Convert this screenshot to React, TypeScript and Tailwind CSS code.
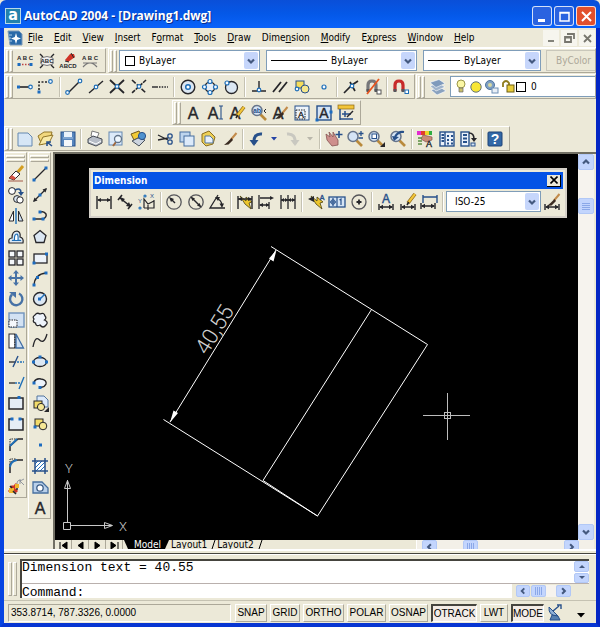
import type { ReactNode } from "react";

const INK = "#26262a";
const BLUE = "#1f6fb8";
const NAVY = "#27508a";
const PALE = "#d5e4f5";

interface LineProps {
  d: string;
  c?: string;
  w?: number;
  f?: string;
  dash?: string;
}

function L({ d, c = INK, w = 1.4, f = "none", dash }: LineProps) {
  return <path d={d} stroke={c} strokeWidth={w} fill={f} strokeDasharray={dash} />;
}

// small ring and square used as snap points
function Ring({ x, y, r = 1.8 }: { x: number; y: number; r?: number }) {
  return <circle cx={x} cy={y} r={r} fill="#f4faff" stroke={BLUE} strokeWidth={1.2} />;
}

function Dot({ x, y }: { x: number; y: number }) {
  return <rect x={x - 1.5} y={y - 1.5} width={3} height={3} fill="#1c6cc0" />;
}

function Abc({ y, t = "ABC", size = 6 }: { y: number; t?: string; size?: number }) {
  return (
    <text x={11} y={y} textAnchor="middle" fontSize={size} fontWeight={700} fontFamily="Liberation Sans, sans-serif" fill={INK}>
      {t}
    </text>
  );
}

function BigA({ x = 11, size = 16, c = INK, y = 16.5 }: { x?: number; size?: number; c?: string; y?: number }) {
  return (
    <text x={x} y={y} textAnchor="middle" fontSize={size} fontFamily="Liberation Sans, sans-serif" fill={c} stroke={c} strokeWidth={0.4}>
      A
    </text>
  );
}

const pencil = (
  <>
    <L d="M18 5 L11 14" c="#8a6512" w={3.6} />
    <L d="M18 5 L11.5 13.4" c="#f2c53a" w={2.2} />
    <L d="M11.8 13 L10 16" w={1.6} />
  </>
);

const brush = (
  <>
    <L d="M18.5 5 L13 11.5" c="#c28a4a" w={2} />
    <path d="M13.5 10 L15 12 L10.5 16.5 L6 17 L9.5 14 Z" fill="#3a2b22" />
  </>
);

const lens = (
  <>
    <L d="M12.5 12.5 L18 18" c="#b98a3c" w={2.6} />
    <circle cx={9} cy={8.5} r={5} fill={PALE} stroke="#66748a" strokeWidth={1.5} />
  </>
);

const bolt = <path d="M6 5 L12 10 L12 6 L18 11 L15 12 L17 18 L11 13 Z" fill="#eec62c" stroke="#4a410f" strokeWidth={0.8} />;

const dimBase = (
  <>
    <L d="M4 13 V19 M18 13 V19 M5 16 H17" />
    <path d="M4 16 L8 13.8 V18.2 Z M18 16 L14 13.8 V18.2 Z" fill={INK} />
  </>
);

function Magnet({ c }: { c: string }) {
  return (
    <>
      <L d="M6 15 V9 Q6 5 10 5 Q14 5 14 9 V15" c={c} w={3.2} />
      <L d="M6 13 V16 M14 13 V16" c="#55565c" w={3} />
    </>
  );
}

const icons: Record<string, ReactNode> = {
  spell1: <><Abc y={10} t="A B C" /><L d="M5 14.5 H17" c="#b44" dash="1.5 1.5" /><Dot x={5} y={14.5} /><Dot x={17} y={14.5} /></>,
  spell2: <><L d="M4 4 L7 7 M18 4 L15 7 M4 18 L7 15 M18 18 L15 15" /><L d="M5 8 Q11 5 17 8 V14 Q11 17 5 14 Z" c="#777" f="#efefef" w={1} /><Abc y={13} /></>,
  spell3: <><path d="M8 10 L13 4 L17 4 L18 7 L11 12 Z" fill="#cf3326" /><L d="M14 3 L17 8 M8 11 L12 12" w={1} /><Abc y={18} t="ABCD" /></>,
  spell4: <><Abc y={10} t="A B C" /><L d="M4 17 Q11 9 18 17 M4 13 H18" c="#777" w={1.2} /></>,
  track: <><L d="M4 11 H16" w={1.6} /><Dot x={4.5} y={11} /><Ring x={16.5} y={11} /></>,
  snapFrom: <><L d="M4 14 V6 H14" dash="2 1.5" w={1.6} /><Dot x={4} y={16} /><Ring x={15.5} y={5.5} /></>,
  endpoint: <><L d="M5 17 L17 5" /><Ring x={4.5} y={16.5} /><Ring x={17} y={5} /></>,
  midpoint: <><L d="M4 17 L18 5" /><Ring x={11} y={11} /></>,
  intersect: <><L d="M4 4 L18 17 M18 4 L4 17" w={1.8} /><Ring x={11} y={10.5} /></>,
  apparent: <><L d="M4 4 L18 17" dash="5 1.5" w={1.6} /><L d="M18 4 L4 17" dash="4 1" w={1.6} /><Ring x={11} y={10.5} /></>,
  extension: <><L d="M3 11 H9" /><L d="M10 11 H19" dash="1.5 1.2" /></>,
  center: <><circle cx={11} cy={11} r={6.8} fill="#dbe7f3" stroke={INK} strokeWidth={1.4} /><circle cx={11} cy={11} r={2.3} fill="#fff" stroke={BLUE} strokeWidth={1.5} /></>,
  quadrant: <><circle cx={11} cy={11} r={5} fill="#e7eef6" stroke={INK} strokeWidth={1.2} /><Ring x={11} y={5.5} r={2} /><Ring x={11} y={16.5} r={2} /><Ring x={5.5} y={11} r={2} /><Ring x={16.5} y={11} r={2} /></>,
  tangent: <><circle cx={11.5} cy={11.5} r={6} fill="#dbe7f3" stroke={INK} strokeWidth={1.3} /><Ring x={7} y={7} r={2} /></>,
  perpend: <><L d="M11 5 V14 M4 15 H18" /><Ring x={11} y={14} /></>,
  parallel: <L d="M4 16 L12 6 M10 16 L18 6" w={1.8} />,
  insertSnap: <><rect x={5} y={5} width={8} height={7} fill="#f5dc5a" stroke={NAVY} /><circle cx={14} cy={13} r={4} fill="#f5e68b" stroke={NAVY} /><Ring x={6} y={13} /></>,
  nodeSnap: <Ring x={11} y={11} r={2} />,
  nearest: <><L d="M4 17 L12 9 L18 5 M10 6 L15 15" w={1.7} /><Ring x={12} y={10} /></>,
  noSnap: <><Magnet c="#77777a" /><L d="M17 3 L5 18" c="#e8541e" w={1.8} /><rect x={15} y={14} width={4} height={4} fill="#fff" stroke="#555" /></>,
  magnet: <><Magnet c="#c72a2a" /><rect x={16} y={14} width={3.5} height={3.5} fill="#fff" stroke={BLUE} /></>,
  layers: <><path d="M4 14 L13 11 L19 15 L10 19 Z" fill="#8aa2bf" stroke="#fff" strokeWidth={0.6} /><path d="M3 10 L12 7 L18 11 L9 15 Z" fill="#9fb3cb" stroke="#fff" strokeWidth={0.6} /><path d="M3 6.5 L12 3.5 L18 7.5 L9 11.5 Z" fill="#7f9abc" stroke="#fff" strokeWidth={0.6} /></>,
  textA: <BigA />,
  textLine: <><BigA x={9} /><L d="M17 4 V17 M15 4 H19 M15 17 H19" c={NAVY} w={1.1} /></>,
  textEdit: <><BigA x={9} /><g>{pencil}</g></>,
  findText: <>{lens}<text x={9} y={11} fontSize={7} textAnchor="middle" fontWeight={700} fontFamily="Liberation Sans, sans-serif" fill={NAVY}>ab</text><L d="M18 7 L16 9 L18 11" w={1} /></>,
  textStyle: <><BigA x={9} />{brush}</>,
  textScale: <><rect x={4} y={4} width={14} height={14} fill="#edf3fa" stroke={NAVY} /><rect x={5} y={8} width={9} height={9} fill="none" stroke={INK} strokeDasharray="1.5 1" /><BigA x={10} size={9} y={16} /></>,
  textJustify: <><rect x={4} y={4} width={14} height={14} fill={PALE} stroke={NAVY} strokeWidth={1.4} /><BigA size={14} y={16} /><Dot x={4} y={18} /><Dot x={18} y={10} /></>,
  textSpace: <><rect x={3} y={3} width={16} height={4} fill="#f2c53a" stroke="#8a6512" strokeWidth={0.7} /><L d="M5 7 V18 M5 17 H18 M7 12 H16 M10 9 V15" w={1.5} c={NAVY} /><L d="M12 15 L18 9" w={1.4} /></>,
  newFile: <path d="M4 5 H14 L18 9 V18 H4 Z" fill="#d6e6f6" stroke="#6488b0" />,
  openFile: <><path d="M3 8 L9 4 L17 4 L16 8 L7 17 Z" fill="#f1d77d" stroke="#927628" /><path d="M4 17 L8 9 L18 7 L14 15 Z" fill="#f8e9a6" stroke="#927628" /><L d="M17 18 L12 14 M12 18 V14 H16" c={NAVY} w={1.6} /></>,
  save: <><rect x={4} y={4} width={14} height={14} fill="#5685bd" stroke={NAVY} /><rect x={7} y={4} width={8} height={5} fill="#eaf2fb" /><rect x={7} y={12} width={8} height={6} fill="#f4f7fa" /><L d="M6 10 H16" c="#a8c4e3" w={1} /></>,
  print: <><path d="M8 3 L15 5 L13 10 L7 8 Z" fill="#fff" stroke="#777" /><path d="M4 11 L9 8 L18 11 V15 L12 18 L4 15 Z" fill="#b6bcc6" stroke="#474c55" /><L d="M5 13 L12 16 L17 13" c="#fff" w={1} /></>,
  preview: <><rect x={4} y={4} width={13} height={13} fill="#dceafa" stroke="#6488b0" /><L d="M11 14 L8 18" c="#a0673c" w={2} /><circle cx={13} cy={11} r={3.5} fill="#eff7ff" stroke="#62748a" strokeWidth={1.3} /></>,
  publish: <><path d="M4 6 L12 3 L15 8 L7 12 Z" fill="#f2cb36" stroke="#73591a" /><path d="M5 13 L11 10 L18 12 L12 18 Z" fill="#ccd4df" stroke="#47505c" /><circle cx={15} cy={8} r={3.6} fill="#4f92cf" stroke={NAVY} /></>,
  cut: <><L d="M4 7 L14 12 M4 12 L14 10" w={1.3} /><circle cx={16} cy={8} r={2.2} fill="none" stroke={NAVY} strokeWidth={1.3} /><circle cx={16} cy={14} r={2.2} fill="none" stroke={NAVY} strokeWidth={1.3} /></>,
  copyClip: <><rect x={4} y={4} width={10} height={10} fill="#bed5ee" stroke="#466f9f" /><rect x={8} y={8} width={10} height={10} fill="#dceafa" stroke="#466f9f" /></>,
  paste: <><path d="M5 6 L12 3 L18 9 L16 16 L9 18 L5 14 Z" fill="#edcf55" stroke="#8b6d1c" /><path d="M8 8 H13 L16 11 V15 H8 Z" fill="#e8f0fa" stroke="#52759d" /></>,
  match: brush,
  undo: <><L d="M16 6 Q7 5 8 16" c={NAVY} w={3} /><path d="M3.5 12 H12.5 L8 18 Z" fill={NAVY} /></>,
  redo: <><L d="M6 6 Q15 5 14 16" c="#c9c8c0" w={3} /><path d="M9.5 12 H18.5 L14 18 Z" fill="#c9c8c0" /></>,
  pan: <><path d="M3 6 L7 9 L6 4 L10 9 L10 4 L13 9 L15 12 L15 17 L9 18 L4 12 Z" fill="#ce8f8c" stroke="#855352" strokeWidth={0.8} /><L d="M16 3 V10 M12.5 6.5 H19.5" c={NAVY} w={1.6} /></>,
  zoomRt: <>{lens}<L d="M17 3 V8 M14.5 5.5 H19.5 M14.5 10 H19" c={NAVY} w={1.3} /></>,
  zoomWin: <>{lens}<rect x={7} y={6} width={4.5} height={4.5} fill="#fff" stroke={NAVY} /><path d="M15 19 H20 V14 Z" fill={INK} /></>,
  zoomPrev: <>{lens}<L d="M17 4 Q11 3 8 9" c={NAVY} w={2.2} /><path d="M5 8 L12 9 L7 13 Z" fill={NAVY} /></>,
  props: <><rect x={3} y={3} width={4} height={4} fill="#e32bd0" /><rect x={7} y={3} width={4} height={4} fill="#e23c2a" /><rect x={11} y={3} width={4} height={4} fill="#ecd52a" /><rect x={15} y={3} width={3} height={4} fill="#30ad41" /><path d="M9 7 L18 9 L18 12 L12 14 L7 11 Z" fill="#c98a76" stroke="#855352" strokeWidth={0.7} /><L d="M4 10 H8 M4 13 H8 M4 16 H8" c="#5a8e41" w={1.5} /><BigA x={15} size={9} y={19} /></>,
  designCtr: <><rect x={4} y={4} width={14} height={14} fill="#eaf1fa" stroke={NAVY} strokeWidth={1.4} /><L d="M9 4 V18" c={NAVY} /><L d="M5.5 7 H8 M5.5 10 H8 M5.5 13 H8 M11 8 H13 M15 8 H17 M11 12 H13 M15 12 H17 M11 15.5 H13 M15 15.5 H17" c={NAVY} w={1.8} /></>,
  palettes: <><rect x={4} y={4} width={8} height={14} fill="#eaf1fa" stroke={NAVY} strokeWidth={1.4} /><L d="M6 7 H10 M6 10.5 H10 M6 14 H10" c={NAVY} w={1.8} /><L d="M12 5 Q17 5 17 11" w={1.6} /><path d="M14 10 H20 L17 14 Z" fill={INK} /><rect x={14} y={15} width={4} height={3} fill={PALE} stroke={NAVY} /></>,
  help: <><rect x={4} y={4} width={14} height={14} rx={1} fill="#3368a6" stroke="#1e4276" /><text x={11} y={16} fontSize={14} textAnchor="middle" fontWeight={700} fontFamily="Liberation Sans, sans-serif" fill="#fff">?</text></>,
  erase: <><L d="M18 3 L12 10" c="#d49e20" w={3} /><path d="M11 8 L15 11 L9 17 L4 15 Z" fill="#fff" stroke={INK} /><path d="M7 12 L11 15 L9 17 L4 15 Z" fill="#d65444" /><L d="M3 18 H18" c="#a45a48" w={1} /></>,
  copy: <><circle cx={7} cy={7} r={3.4} fill="#fff" stroke={INK} /><circle cx={12} cy={15} r={3.4} fill="#dbe7f3" stroke={INK} /><circle cx={15} cy={16} r={3.2} fill="#fff" stroke={INK} /><L d="M10 6 Q16 3 16 9" c={NAVY} w={1.6} /><path d="M13 8 H19 L16 12 Z" fill={NAVY} /></>,
  mirror: <><path d="M8.5 6 V16 H4 Z" fill="#fff" stroke={INK} /><path d="M13.5 6 V16 H18 Z" fill="#cfe0f2" stroke={INK} /><L d="M11 3 V19" c={BLUE} w={1.4} /></>,
  offset: <><L d="M4 17 Q3 12 7 12 Q7 5 12 5 Q16 6 15 11 Q19 12 18 17 Z" c={INK} w={1.2} f="#dbe7f3" /><L d="M7 14.5 Q8 14 9.5 14 Q9 8 12 8 Q13.5 9 13 14 Q15 14 16 14.5 Z" c={BLUE} w={1.2} f="#fff" /></>,
  array: <>{[4, 12].map((x) => [4, 12].map((y) => <rect key={`${x}-${y}`} x={x} y={y} width={6} height={6} fill="#f4f7fa" stroke={INK} strokeWidth={1.3} />))}</>,
  move: <><L d="M11 5 V17 M5 11 H17" c="#4772a6" w={2} /><path d="M11 3 L14 6.5 H8 Z M11 19 L14 15.5 H8 Z M3 11 L6.5 8 V14 Z M19 11 L15.5 8 V14 Z" fill="#4772a6" /></>,
  rotate: <><L d="M14 5.5 A6.2 6.2 0 1 1 7 6.5" c="#4772a6" w={2.4} /><path d="M4 4 H11 V10 Z" fill="#4772a6" /></>,
  scale: <><rect x={4} y={4} width={15} height={14} fill="#d3e2f3" stroke="#6f93bd" strokeWidth={1.4} /><rect x={4} y={11} width={8} height={7} fill="#f5f8fc" stroke={INK} strokeDasharray="1.5 1" /></>,
  stretch: <><rect x={4} y={4} width={6} height={14} fill="#fff" stroke={INK} /><L d="M10 4 V18" dash="1.5 1" w={1.4} /><path d="M11 4 L18.5 18 H11 Z" fill="#cfe0f2" stroke="#3f6da6" strokeWidth={1.3} /></>,
  trim: <><L d="M4 11 H11" w={1.3} /><L d="M12 11 H19" dash="2 1" c={BLUE} w={1.3} /><L d="M13 5 L8 16" c={NAVY} w={1.4} /></>,
  extend: <><L d="M4 11 H10" w={1.3} /><L d="M10 11 H16" dash="2 1" c={BLUE} w={1.3} /><L d="M19 5 L14 17" c={BLUE} w={1.4} /></>,
  breakPt: <><rect x={4} y={6} width={14} height={11} fill="#e5edf6" stroke={INK} strokeWidth={1.5} /><Dot x={14} y={5.5} /></>,
  breakAt: <><L d="M7 6 H4 V17 H18 V6 H15" f="#e5edf6" w={1.5} /><Dot x={7} y={6} /><Dot x={15} y={6} /></>,
  chamfer: <><L d="M5 17 V12 L13 5 H18" w={1.5} /><L d="M5 11 V5 H12" dash="1.5 1" w={1} /><L d="M5 12 L12 5" c={BLUE} w={1.8} /></>,
  fillet: <><L d="M5 18 V12 Q5 5 13 5 H18" w={1.5} /><L d="M5 10 V4 H11" dash="1.5 1" w={1} /><L d="M5 12 Q6 6 12 5" c={BLUE} w={1.8} /></>,
  explode: <><L d="M4 16 L12 8 M6 10 L12 16" c="#cf3326" w={3} /><path d="M4 12 H9 V17 H4 Z M10 8 H14 V12 H10 Z" fill="#efb62c" /><L d="M5 10 L7 12 M8 15 L11 18 M11 13 H13" w={1.6} /><L d="M12 8 Q12 3 16 5 M15 5 L19 3 M15 5 L19 9 M15 3 V8" c="#8a9099" w={0.9} /></>,
  line: <><L d="M5 17 L17 5" w={1.3} /><Dot x={5} y={17} /><Dot x={17} y={5} /></>,
  xline: <><L d="M5 17 L17 5" w={1.3} /><path d="M4 18 L8.5 16.5 L5.5 13.500 Z M18 4 L13.5 5.5 L16.5 8.5 Z" fill={INK} /><Dot x={11} y={11} /></>,
  pline: <><L d="M5 14 H14 Q18 12 17 9 Q15 6 12 7" w={1.4} /><Dot x={5} y={14} /><Dot x={14} y={14} /><Dot x={11} y={7} /></>,
  polygon: <L d="M11 4.5 L17 9.5 L15 16.5 H7 L5 9.5 Z" f="#dbe7f3" w={1.3} />,
  rect: <><rect x={5} y={7} width={13} height={9} fill="#edf3fa" stroke={INK} strokeWidth={1.3} /><Dot x={5} y={16} /><Dot x={17.5} y={7} /></>,
  arc: <><L d="M5 17 Q6 6 17 5" w={1.3} /><Dot x={5} y={17} /><Dot x={8.5} y={9.5} /><Dot x={17} y={5} /></>,
  circle: <><circle cx={11} cy={11} r={6.5} fill="#dbe7f3" stroke={INK} strokeWidth={1.4} /><L d="M11 11 L16 6" c={BLUE} /><Dot x={10.5} y={11} /></>,
  cloud: <L d="M6 6 Q8 3 11 5 Q15 3 16 7 Q18 9 15.5 11 Q20 13 17 16 Q14 20 11 16 Q7 18 6.5 14 Q3 13 5 10 Q3 8 6 6 Z" f="#edf3fa" w={1.3} />,
  spline: <L d="M4 17 Q6 6 10 9.5 Q15 15 18 4" w={1.3} />,
  ellipse: <><ellipse cx={11} cy={11} rx={6.5} ry={4.5} fill="#dbe7f3" stroke={INK} strokeWidth={1.3} /><Dot x={4.5} y={11} /><Dot x={17.5} y={11} /><Dot x={11} y={6} /></>,
  ellipseArc: <><L d="M5 10 Q7 6 12 7 Q18 8 17 12 Q15 16 11 15" w={1.4} f="#edf3fa" /><Dot x={5} y={11} /><Dot x={11} y={15.5} /></>,
  insertBlk: <><path d="M8 3 H15 L19 7 V14 H8 Z" fill="#dceafa" stroke="#52759d" /><rect x={5} y={8} width={8} height={7} fill="#f3dc6a" stroke={INK} /><circle cx={12} cy={14} r={3.6} fill="#f6e896" stroke={INK} /><path d="M15 19 H20 V14 Z" fill={INK} /></>,
  makeBlk: <><rect x={6} y={6} width={8} height={7} fill="#f3dc6a" stroke={INK} /><circle cx={14} cy={13} r={3.8} fill="#f6e896" stroke={INK} /><Dot x={6} y={14} /></>,
  point: <Dot x={11.5} y={11} />,
  hatch: <><rect x={6} y={6} width={10} height={10} fill="#fff" /><L d="M6 9 L9 6 M6 13 L13 6 M7 16 L16 7 M11 16 L16 11" c={BLUE} w={1} /><L d="M6 3 V19 M16 3 V19 M3 6 H19 M3 16 H19" c={NAVY} w={1.5} /></>,
  region: <><path d="M4 6 H13 L19 12 V17 H4 Z" fill="#b9d0ea" stroke="#466f9f" strokeWidth={1.3} /><circle cx={11} cy={12} r={3.2} fill="#fff" stroke="#3b5d87" strokeWidth={1.3} /></>,
  dimLinear: <><L d="M4 5 V18 M18 5 V18 M5 9 H17" /><path d="M4 9 L8 7 V11 Z M18 9 L14 7 V11 Z" fill={INK} /></>,
  dimAligned: <><L d="M4 9 L8 4 M14 18 L18 13 M6 7 L16 15" w={1.6} /><path d="M6 6 L11 8 L8 11 Z M17 16 L12 15 L15 11 Z" fill={INK} /></>,
  dimOrdinate: <><L d="M8 17 V8 L12 13 L18 10 M8 17 H18 V9 M12 14 V19" w={1.2} /><text x={2} y={12} fontSize={6} fill={NAVY} fontFamily="Liberation Sans, sans-serif">Y</text><text x={14} y={7} fontSize={6} fill={NAVY} fontFamily="Liberation Sans, sans-serif">X</text><Ring x={4} y={17} r={1} /><Ring x={9} y={5} r={1} /></>,
  dimRadius: <><circle cx={11} cy={11} r={7.2} fill="none" stroke="#56565a" strokeWidth={1.3} /><L d="M12 12 L8 8" /><path d="M6 6 L11 8 L8 11 Z" fill={INK} /></>,
  dimDiameter: <><circle cx={11} cy={11} r={7.2} fill="none" stroke="#56565a" strokeWidth={1.3} /><L d="M7 7 L15 15" /><path d="M5.5 5.5 L10 7.5 L7.5 10 Z M16.5 16.5 L12 14.5 L14.5 12 Z" fill={INK} /></>,
  dimAngular: <><L d="M12 4 L4 17 H19 M10 7 Q16 9 16 15" w={1.3} /><path d="M16 17 L13.5 12.5 H18 Z M9 6 L14 6 L12 10 Z" fill={INK} /></>,
  dimQuick: <>{bolt}<L d="M4 5 V18 M18 5 V18 M4 8 H18" /><path d="M4 8 L8 6 V10 Z M18 8 L14 6 V10 Z" fill={INK} /></>,
  dimBaseline: <><L d="M4 4 V18 M5 7 H17 M5 14 H14 M14 11 V18" w={1.3} /><path d="M19 7 L15 5 V9 Z M4 14 L8 12 V16 Z M14 14 L11 12 V16 Z" fill={INK} /></>,
  dimContinue: <><L d="M4 4 V18 M11 4 V18 M18 4 V18 M4 9 H18" w={1.3} /><path d="M4 9 L7 7 V11 Z M11 9 L8 7 V11 Z M11 9 L14 7 V11 Z M18 9 L15 7 V11 Z" fill={INK} /></>,
  leader: <>{bolt}<path d="M3 8 L9 5 V11 Z" fill={INK} /><BigA x={17} size={7} y={9} c={NAVY} /></>,
  tolerance: <><rect x={3} y={6} width={16} height={10} fill={PALE} stroke={NAVY} strokeWidth={1.3} /><L d="M11 6 V16 M7 7 V15 M4 11 H10 M13.5 9 L15 8 V14" c={NAVY} w={1.2} /><circle cx={7} cy={11} r={2.2} fill="none" stroke={NAVY} /></>,
  centerMark: <><circle cx={11} cy={11} r={7} fill="none" stroke="#56565a" strokeWidth={1.3} /><L d="M11 8.5 V13.5 M8.5 11 H13.5" w={1.8} /></>,
  dimTextEdit: <><BigA size={12} y={12} c={NAVY} />{dimBase}</>,
  dimEdit: <><g transform="translate(0 -2)">{pencil}</g>{dimBase}</>,
  dimUpdate: <><L d="M5 4 V12 M19 4 V12 M5 6 H19" c={NAVY} /><g transform="translate(-1 -1)">{dimBase}</g></>,
  dimStyle: <><g transform="translate(0 -2)">{brush}</g>{dimBase}</>,
  satellite: <><path d="M5 5 Q4 14 14 14 L10 10 Z" fill="#8fb0d6" stroke={NAVY} /><L d="M9 9 L15 4 M13 3 H17 V7" c={NAVY} /><path d="M8 13 L14 14 L16 18 H6 Z" fill="#5680b0" stroke={NAVY} /></>,
};

function Icon({ name }: { name: string }) {
  return (
    <svg viewBox="0 0 22 22" className="h-[22px] w-[22px] shrink-0" aria-hidden="true">
      {icons[name]}
    </svg>
  );
}

function Tool({ name }: { name: string }) {
  return (
    <button type="button" aria-label={name} className="flex min-h-0 min-w-0 flex-1 items-center justify-center">
      <Icon name={name} />
    </button>
  );
}

function Tools({ names }: { names: string[] }) {
  return (
    <>
      {names.map((name, i) =>
        name === "|" ? <span key={i} className="mx-[2px] h-5 w-[2px] border-l border-r border-l-[#c5c2b2] border-r-white" /> : <Tool key={i} name={name} />
      )}
    </>
  );
}

function Grip({ vertical = false }: { vertical?: boolean }) {
  const edge = "border-t border-l border-b border-r border-t-white border-l-white border-r-[#aca899] border-b-[#aca899]";
  return vertical ? (
    <span className="flex flex-col gap-px px-px py-[2px]">
      <span className={`h-[3px] ${edge}`} />
      <span className={`h-[3px] ${edge}`} />
    </span>
  ) : (
    <span className="mx-px flex h-[22px] shrink-0 gap-px">
      <span className={`w-[3px] ${edge}`} />
      <span className={`w-[3px] ${edge}`} />
    </span>
  );
}

const bar = "flex h-[25px] items-center border-t border-l border-r border-b border-t-white border-l-white border-r-[#aca899] border-b-[#aca899]";

type Dir = "up" | "down" | "left" | "right";
const chevrons: Record<Dir, string> = {
  up: "M4 8.5 L7 5.5 L10 8.5",
  down: "M4 5.5 L7 8.5 L10 5.5",
  left: "M8.5 4 L5.5 7 L8.5 10",
  right: "M5.5 4 L8.5 7 L5.5 10",
};

function Chevron({ dir }: { dir: Dir }) {
  return (
    <svg viewBox="0 0 14 14" className="h-[14px] w-[14px]" aria-hidden="true">
      <path d={chevrons[dir]} fill="none" stroke="#44597f" strokeWidth={2.2} />
    </svg>
  );
}

const scrollFace = "flex shrink-0 items-center justify-center overflow-hidden rounded-xs border border-[#b2c8f6] bg-[#c3d5fd]";

interface ComboProps {
  label: string;
  value: string;
  className: string;
  children?: ReactNode;
}

function Combo({ label, value, className, children }: ComboProps) {
  return (
    <label className={`flex h-[21px] items-center border border-[#7f9db9] bg-white p-px pl-1 ${className}`}>
      {children}
      <select aria-label={label} className="ml-1 h-full min-w-0 flex-1 appearance-none bg-white text-[10px] outline-none">
        <option>{value}</option>
      </select>
      <span className="flex h-full w-[14px] shrink-0 items-center justify-center rounded-xs bg-[#c6d6fb]">
        <Chevron dir="down" />
      </span>
    </label>
  );
}

const menus = [
  ["", "F", "ile"],
  ["", "E", "dit"],
  ["", "V", "iew"],
  ["", "I", "nsert"],
  ["F", "o", "rmat"],
  ["", "T", "ools"],
  ["", "D", "raw"],
  ["Dime", "n", "sion"],
  ["", "M", "odify"],
  ["E", "x", "press"],
  ["", "W", "indow"],
  ["", "H", "elp"],
];

function TitleBar() {
  const button = "flex h-[20px] w-[20px] items-center justify-center rounded-[3px] border border-white/80";
  return (
    <header className="flex h-7 shrink-0 items-center rounded-t-md bg-linear-to-b from-[#0a4fd8] via-[#0458e8] to-[#0a62fa] pt-1 pr-1 pl-[5px]">
      <span className="mr-[3px] flex h-4 w-4 items-center justify-center border border-[#b7d9e8] bg-[#2382ad] text-[16px] leading-none font-bold text-white">
        <span className="pb-[3px]">a</span>
      </span>
      <h1 className="flex-1 font-['Open_Sans',sans-serif] text-[12px] font-bold text-white [text-shadow:1px_1px_0_#0a2c8c]">AutoCAD 2004 - [Drawing1.dwg]</h1>
      <div className="flex gap-[2px]">
        <button type="button" aria-label="Minimize" className={`${button} bg-[#2a63e0]`}>
          <svg viewBox="0 0 17 17" className="h-[17px] w-[17px]"><path d="M4 12.5 H11" stroke="#fff" strokeWidth={3} /></svg>
        </button>
        <button type="button" aria-label="Maximize" className={`${button} bg-[#2a63e0]`}>
          <svg viewBox="0 0 17 17" className="h-[17px] w-[17px]"><path d="M4 4.5 H13 V13 H4 Z M4 5 H13" fill="none" stroke="#fff" strokeWidth={1.5} /></svg>
        </button>
        <button type="button" aria-label="Close" className={`${button} bg-[#e2502c]`}>
          <svg viewBox="0 0 17 17" className="h-[17px] w-[17px]"><path d="M4 4 L13 13 M13 4 L4 13" stroke="#fff" strokeWidth={2} /></svg>
        </button>
      </div>
    </header>
  );
}

function MenuBar() {
  return (
    <nav className="flex h-5 shrink-0 items-center border-b border-white pl-[3px]">
      <svg viewBox="0 0 16 16" className="mr-[5px] h-4 w-4" aria-hidden="true">
        <path d="M1 1 H12 L15 4 V15 H3 Z" fill="#2a6aa8" stroke="#7b98b8" />
        <path d="M9 3 L10.2 7 L14 8.5 L10.2 10 L9 14 L7.8 10 L4 8.5 L7.8 7 Z" fill="#fff" />
        <path d="M2 5 H5 M2 8 H4 M2 11 H5" stroke="#a9cbe8" />
      </svg>
      <div className="flex flex-1 gap-[11px]">
        {menus.map(([before, key, after]) => (
          <button type="button" key={before + key + after}>
            {before}
            <u>{key}</u>
            {after}
          </button>
        ))}
      </div>
      <div className="flex gap-[2px] pr-px">
        {["M5 11 H11", "M6 4 H13 V9 M4 7 H10 V12 H4 Z M4 7.5 H10", "M5 5 L12 12 M12 5 L5 12"].map((d) => (
          <button type="button" key={d} aria-label="Drawing window" className="h-4 w-4 bg-[#f6f5ee]">
            <svg viewBox="0 0 16 16" className="h-4 w-4"><path d={d} fill="none" stroke="#77766e" strokeWidth={1.8} /></svg>
          </button>
        ))}
      </div>
    </nav>
  );
}

function PropertiesRow() {
  return (
    <div className="flex h-[26px] shrink-0 overflow-hidden">
      <div className={`${bar} w-[102px] shrink-0 pr-1`}>
        <Grip />
        <Tools names={["spell1", "spell2", "spell3", "spell4"]} />
      </div>
      <div className={`${bar} ml-[2px] min-w-0 flex-1`}>
        <Grip />
        <Combo label="Color" value="ByLayer" className="ml-px w-[141px]">
          <span className="ml-px h-[10px] w-[10px] border border-black" />
        </Combo>
        <Combo label="Linetype" value="ByLayer" className="ml-[6px] w-[151px]">
          <span className="w-14 border-t border-black" />
        </Combo>
        <Combo label="Lineweight" value="ByLayer" className="ml-[6px] w-[118px]">
          <span className="w-8 border-t border-black" />
        </Combo>
        <div className="ml-[5px] flex h-[21px] min-w-0 flex-1 items-center border border-r-0 border-[#c9c7ba] pl-[9px] whitespace-nowrap text-[#aca899]">ByColor</div>
      </div>
    </div>
  );
}

function SnapRow() {
  return (
    <div className="flex h-[26px] shrink-0">
      <div className={`${bar} w-[411px] shrink-0 pr-[3px]`}>
        <Grip />
        <Tools
          names={["track", "snapFrom", "|", "endpoint", "midpoint", "intersect", "apparent", "extension", "|", "center", "quadrant", "tangent", "|", "perpend", "parallel", "insertSnap", "nodeSnap", "|", "nearest", "noSnap", "|", "magnet"]}
        />
      </div>
      <div className={`${bar} ml-px min-w-0 flex-1`}>
        <Grip />
        <div className="flex w-[24px]">
          <Tool name="layers" />
        </div>
        <div className="flex h-[21px] flex-1 items-center border border-r-0 border-[#7f9db9] bg-white pl-[3px]">
          <svg viewBox="0 0 72 20" className="h-5 w-[72px]" aria-hidden="true">
            <circle cx={7} cy={7} r={4} fill="#fbf7a4" stroke="#9b964a" />
            <path d="M5 11 H9 V15 H5 Z" fill="#c9c06a" stroke="#666" strokeWidth={0.7} />
            <circle cx={22} cy={10} r={5.2} fill="#f8e636" stroke="#63747b" />
            <circle cx={36} cy={8} r={4.5} fill="#7e9fc4" stroke="#4d749f" />
            <circle cx={36} cy={8} r={2} fill="#d8d9a0" />
            <rect x={38} y={11} width={6} height={5} fill="#e9eff6" stroke="#6f8fb4" />
            <path d="M49 10 V6 Q52 2 55 6 V9" fill="none" stroke="#8e7b1c" strokeWidth={1.8} />
            <rect x={53} y={8} width={7} height={7} fill="#e8cd3a" stroke="#6f5f12" />
            <rect x={62.5} y={5.5} width={9} height={9} fill="#fff" stroke="#000" />
          </svg>
          <span className="pl-[5px]">0</span>
        </div>
      </div>
    </div>
  );
}

function TextRow() {
  return (
    <div className="flex h-[26px] shrink-0">
      <div className={`${bar} ml-[168px] w-[189px] pr-[3px]`}>
        <Grip />
        <Tools names={["textA", "textLine", "textEdit", "findText", "textStyle", "textScale", "textJustify", "textSpace"]} />
      </div>
    </div>
  );
}

function SmallArrow({ color }: { color: string }) {
  return (
    <button type="button" aria-label="History" className="flex w-[14px] justify-center">
      <svg viewBox="0 0 6 4" className="h-1 w-[6px]"><path d="M0 0 H6 L3 3.5 Z" fill={color} /></svg>
    </button>
  );
}

function StandardRow() {
  return (
    <div className="flex h-[26px] shrink-0">
      <div className={`${bar} w-[506px] pr-[3px]`}>
        <Grip />
        <Tools names={["newFile", "openFile", "save", "|", "print", "preview", "publish", "|", "cut", "copyClip", "paste", "match", "|", "undo"]} />
        <SmallArrow color="#2544a5" />
        <Tool name="redo" />
        <SmallArrow color="#b9b7ab" />
        <Tools names={["|", "pan", "zoomRt", "zoomWin", "zoomPrev", "|", "props", "designCtr", "palettes", "|", "help"]} />
      </div>
    </div>
  );
}

const modifyTools = ["erase", "copy", "mirror", "offset", "array", "move", "rotate", "scale", "stretch", "trim", "extend", "breakPt", "breakAt", "chamfer", "fillet", "explode"];
const drawTools = ["line", "xline", "pline", "polygon", "rect", "arc", "circle", "cloud", "spline", "ellipse", "ellipseArc", "insertBlk", "makeBlk", "point", "hatch", "region", "textA"];

function SideBar({ tools, className }: { tools: string[]; className: string }) {
  return (
    <div className={`flex w-[23px] flex-col self-start border border-t-white border-r-[#aca899] border-b-[#aca899] border-l-white ${className}`}>
      <Grip vertical />
      <Tools names={tools} />
    </div>
  );
}

function DimensionPalette() {
  return (
    <section className="absolute top-[14px] left-[34px] w-[478px] border-2 border-[#d4d0c8] bg-[#ece9d8] p-[2px]">
      <div className="flex h-[17px] items-center justify-between bg-[#0453e6] pr-[2px] pl-px">
        <h2 className="text-[10px] font-bold text-white">Dimension</h2>
        <button type="button" aria-label="Close palette" className="flex h-3 w-[14px] items-center justify-center border-r border-b border-black bg-[#ece9d8]">
          <svg viewBox="0 0 8 8" className="h-2 w-2"><path d="M0.5 0.5 L7.5 7.5 M7.5 0.5 L0.5 7.5" stroke="#000" strokeWidth={1.6} /></svg>
        </button>
      </div>
      <div className="flex h-[25px] items-center">
        <div className="flex h-full w-[353px] items-center">
          <Tools names={["dimLinear", "dimAligned", "dimOrdinate", "|", "dimRadius", "dimDiameter", "dimAngular", "|", "dimQuick", "dimBaseline", "dimContinue", "|", "leader", "tolerance", "centerMark", "|", "dimTextEdit", "dimEdit", "dimUpdate", "|"]} />
        </div>
        <Combo label="Dimension style" value="ISO-25" className="w-[95px] pl-0" />
        <Tool name="dimStyle" />
      </div>
    </section>
  );
}

function Canvas() {
  return (
    <main className="relative min-h-0 min-w-0 flex-1 overflow-hidden bg-black">
      <svg viewBox="55 154 523 386" preserveAspectRatio="xMinYMin meet" className="h-full w-full" fill="none" stroke="#fff" strokeWidth={1}>
        <path d="M271 246.500 L427.5 344.5 L317.5 516 L163.5 419.5 M276 250 L170 422 M371.5 309.5 L263 480.5 L317.5 516" />
        <path d="M276.5 250 L273.5 261.5 L269 258.5 Z M170 422.5 L178 413 L173.5 410.5 Z" fill="#fff" stroke="none" />
        <text transform="translate(207 356) rotate(-58.5)" fontSize={22} fontFamily="Roboto, sans-serif" fontWeight={300} fill="#cfcfcf" stroke="none">
          40,55
        </text>
        <g stroke="#bdbdbd">
          <path d="M447.5 393 V440 M423 415.5 H470" />
          <rect x={444.5} y={412.5} width={6} height={6} />
        </g>
        <g stroke="#c8c8c8">
          <path d="M63.5 522.5 H70.5 V529.5 H63.5 Z M67.5 522 V489 M71 525.5 H104" />
          <path d="M67.5 480.5 L70.5 488.5 H64.5 Z M112.5 525.5 L104.5 522.5 V528.5 Z" />
          <path d="M67.5 480 V489 M104 525.5 H112" />
        </g>
        <g fill="#c8c8c8" stroke="none" fontSize={13} fontFamily="Roboto, sans-serif" fontWeight={300}>
          <text x={65} y={473}>Y</text>
          <text x={119} y={531}>X</text>
        </g>
      </svg>
      <DimensionPalette />
    </main>
  );
}

function VerticalScroll() {
  return (
    <div className="flex w-4 shrink-0 flex-col bg-[#f6f3ee]">
      <button type="button" aria-label="Scroll up" className={`${scrollFace} h-4`}><Chevron dir="up" /></button>
      <div className="flex flex-1 flex-col pt-7">
        <span className={`${scrollFace} h-4`}>
          <svg viewBox="0 0 8 8" className="h-2 w-2"><path d="M0 1.5 H8 M0 3.5 H8 M0 5.5 H8 M0 7.5 H8" stroke="#8ba8e8" /></svg>
        </span>
      </div>
      <button type="button" aria-label="Scroll down" className={`${scrollFace} h-4`}><Chevron dir="down" /></button>
    </div>
  );
}

function HorizontalThumb() {
  return (
    <span className={`${scrollFace} w-[15px]`}>
      <svg viewBox="0 0 8 8" className="h-2 w-2"><path d="M0.5 0 V8 M2.5 0 V8 M4.5 0 V8 M6.5 0 V8" stroke="#8ba8e8" /></svg>
    </span>
  );
}

function TabStrip() {
  const nav = ["M5 2 V9 M12 2 V9 L7 5.5 Z", "M11 2 V9 L6 5.5 Z", "M6 2 V9 L11 5.5 Z", "M12 2 V9 M5 2 V9 L10 5.5 Z"];
  return (
    <div className="flex h-[9px] shrink-0 overflow-hidden">
      <div className="flex flex-1">
        {nav.map((d) => (
          <button type="button" key={d} aria-label="Browse tabs" className="h-[9px] w-[17px] border-r border-[#aca899]">
            <svg viewBox="0 0 16 9" className="h-[9px] w-4"><path d={d} fill="#000" stroke="#000" /></svg>
          </button>
        ))}
        <svg viewBox="0 0 9 9" className="h-[9px] w-[9px]"><path d="M1 0 H9 V9 H5 Z" fill="#000" /></svg>
        <button type="button" className="bg-black px-[2px] leading-[9px] text-white">Model</button>
        <svg viewBox="0 0 8 9" className="h-[9px] w-2"><path d="M0 0 H6 L2 9 H0 Z" fill="#000" /></svg>
        <button type="button" className="leading-[9px]">Layout1</button>
        <svg viewBox="0 0 10 9" className="h-[9px] w-[10px]"><path d="M8 0 L5 9" stroke="#000" /></svg>
        <button type="button" className="leading-[9px]">Layout2</button>
        <svg viewBox="0 0 10 9" className="h-[9px] w-[10px]"><path d="M8 0 L5 9" stroke="#000" /></svg>
      </div>
      <div className="flex h-[14px] w-[178px] shrink-0 border-l border-white bg-[#f3f0e8] pr-[15px] pl-[5px]">
        <button type="button" aria-label="Scroll left" className={`${scrollFace} w-[15px]`}><Chevron dir="left" /></button>
        <span className="w-[26px]" />
        <HorizontalThumb />
        <span className="flex-1" />
        <button type="button" aria-label="Scroll right" className={`${scrollFace} w-[15px]`}><Chevron dir="right" /></button>
      </div>
    </div>
  );
}

function CommandWindow() {
  const grip = "w-[4px] border border-t-white border-r-[#aca899] border-b-[#aca899] border-l-white";
  return (
    <section className="flex h-[46px] shrink-0 border-b border-[#c5c2b2] pt-1 pr-[7px] pb-[2px] pl-1">
      <span className="mt-[3px] mr-[3px] flex h-[34px] gap-px">
        <span className={grip} />
        <span className={grip} />
      </span>
      <div className="flex flex-1 flex-col border-t-2 border-l-2 border-[#45443e] bg-white font-['Liberation_Mono',monospace] text-[13px]">
        <div className="flex h-[23px] border-b border-[#b9b0ad]">
          <p className="flex-1 leading-[14px]">Dimension text = 40.55</p>
          <div className="flex w-[15px] flex-col gap-px">
            <button type="button" aria-label="History up" className={`${scrollFace} min-h-0 flex-1`}><svg viewBox="0 0 6 3" className="h-[3px] w-[6px]"><path d="M0 3 H6 L3 0 Z" fill="#44597f" /></svg></button>
            <button type="button" aria-label="History down" className={`${scrollFace} min-h-0 flex-1`}><svg viewBox="0 0 6 3" className="h-[3px] w-[6px]"><path d="M0 0 H6 L3 3 Z" fill="#44597f" /></svg></button>
          </div>
        </div>
        <div className="flex min-h-0 flex-1">
          <label htmlFor="command" className="leading-[17px]">Command:</label>
          <input id="command" className="min-w-0 flex-1 outline-none" />
          <div className="flex w-[77px] shrink-0 bg-[#ece9d8] py-px pl-1">
            <button type="button" aria-label="Scroll left" className={`${scrollFace} w-[14px]`}><Chevron dir="left" /></button>
            <span className="ml-px flex"><HorizontalThumb /></span>
            <span className="w-[10px] bg-[#f6f3ee]" />
            <button type="button" aria-label="Scroll right" className={`${scrollFace} w-[15px]`}><Chevron dir="right" /></button>
          </div>
        </div>
      </div>
    </section>
  );
}

const modes = [
  { name: "SNAP", width: "w-8", on: false },
  { name: "GRID", width: "w-[30px]", on: false },
  { name: "ORTHO", width: "w-[41px]", on: false },
  { name: "POLAR", width: "w-[39px]", on: false },
  { name: "OSNAP", width: "w-[39px]", on: false },
  { name: "OTRACK", width: "w-[46px]", on: true },
  { name: "LWT", width: "w-7", on: false },
  { name: "MODE", width: "w-[33px]", on: true },
];

function StatusBar() {
  return (
    <footer className="flex h-[22px] shrink-0 items-center pt-px pl-1 font-['Liberation_Sans',sans-serif] text-[10px]">
      <output className="mr-1 flex h-[18px] min-w-0 flex-1 items-center border border-t-[#aca899] border-r-white border-b-white border-l-[#aca899] pl-[2px]">353.8714, 787.3326, 0.0000</output>
      <div className="flex gap-[3px]">
        {modes.map((m) => (
          <button
            type="button"
            key={m.name}
            aria-pressed={m.on}
            className={`flex h-[18px] items-center justify-center border ${m.width} ${
              m.on ? "border-t-2 border-l-2 border-t-[#45443e] border-r-white border-b-white border-l-[#45443e] bg-[#f3ece6]" : "border-t-white border-r-[#aca899] border-b-[#aca899] border-l-white"
            }`}
          >
            {m.name}
          </button>
        ))}
      </div>
      <Icon name="satellite" />
      <button type="button" aria-label="Status menu" className="flex w-[30px] justify-center pt-[5px]">
        <svg viewBox="0 0 8 5" className="h-[5px] w-2"><path d="M0 0 H8 L4 4.5 Z" fill="#000" /></svg>
      </button>
    </footer>
  );
}

export default function App() {
  return (
    <div className="flex h-screen min-h-[480px] flex-col overflow-hidden bg-[#ece9d8] font-['DejaVu_Sans_Condensed','DejaVu_Sans',sans-serif] text-[10px] text-black">
      <TitleBar />
      <div className="flex min-h-0 flex-1 flex-col border-r-4 border-b-4 border-l-4 border-r-[#0426c4] border-b-[#0735d2] border-l-[#0644e2]">
        <MenuBar />
        <PropertiesRow />
        <SnapRow />
        <TextRow />
        <StandardRow />
        <div className="flex min-h-0 flex-1">
          <SideBar tools={modifyTools} className="h-[346px]" />
          <SideBar tools={drawTools} className="ml-px h-[367px]" />
          <div className="ml-[2px] flex min-w-0 flex-1 flex-col border-t-2 border-l-2 border-[#716f64] pr-[2px]">
            <div className="flex min-h-0 flex-1">
              <Canvas />
              <VerticalScroll />
            </div>
            <TabStrip />
          </div>
        </div>
        <div className="h-[6px] shrink-0 border-t-2 border-b border-t-white border-b-white pt-[2px]">
          <div className="h-px bg-[#45443e]" />
        </div>
        <CommandWindow />
        <StatusBar />
      </div>
    </div>
  );
}
